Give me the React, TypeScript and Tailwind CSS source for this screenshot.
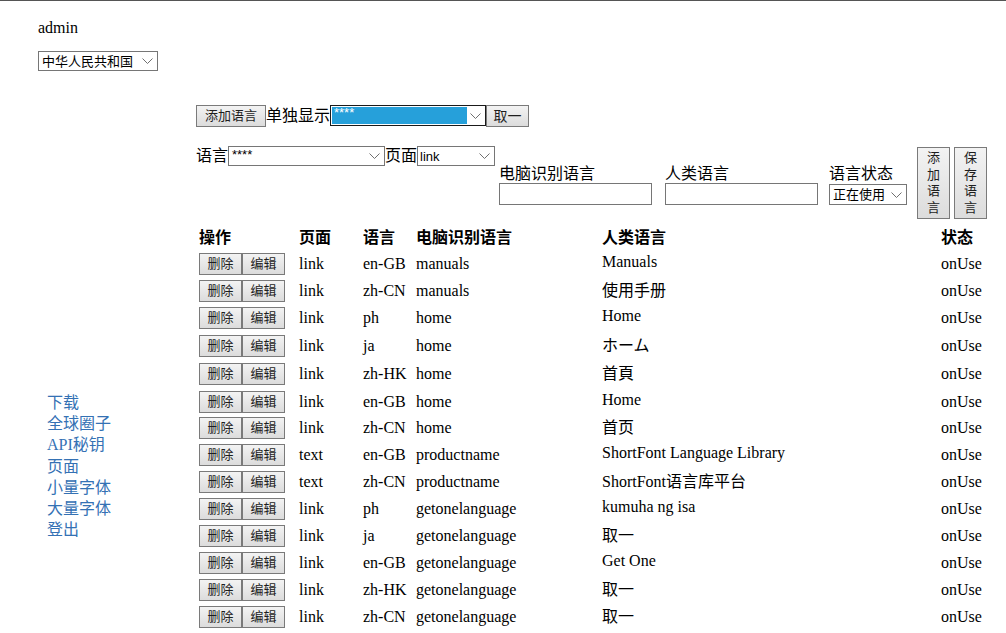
import React from 'react';

const serif = "font-['Liberation_Serif','Noto_Sans_CJK_SC',serif]";
const sans = "font-['Liberation_Sans','Noto_Sans_CJK_SC',sans-serif]";
const btn = `${sans} text-[13px] text-[#1e1e1e] border border-[#7a7a7a] bg-gradient-to-b from-[#f3f3f3] to-[#dcdcdc] flex items-center justify-center`;

const Chevron = () => (
  <svg width="11" height="6" viewBox="0 0 11 6" className="shrink-0">
    <path d="M0.5 0.5 L5.5 5.5 L10.5 0.5" fill="none" stroke="#6f6f6f" strokeWidth="1" />
  </svg>
);

const rows: { page: string; lang: string; key: string; human: string; latin?: boolean; h: string }[] = [
  { page: 'link', lang: 'en-GB', key: 'manuals', human: 'Manuals', latin: true, h: 'h-[27px]' },
  { page: 'link', lang: 'zh-CN', key: 'manuals', human: '使用手册', h: 'h-[27px]' },
  { page: 'link', lang: 'ph', key: 'home', human: 'Home', latin: true, h: 'h-[27px]' },
  { page: 'link', lang: 'ja', key: 'home', human: 'ホーム', h: 'h-[29px]' },
  { page: 'link', lang: 'zh-HK', key: 'home', human: '首頁', h: 'h-[28px]' },
  { page: 'link', lang: 'en-GB', key: 'home', human: 'Home', latin: true, h: 'h-[27px]' },
  { page: 'link', lang: 'zh-CN', key: 'home', human: '首页', h: 'h-[26px]' },
  { page: 'text', lang: 'en-GB', key: 'productname', human: 'ShortFont Language Library', latin: true, h: 'h-[27px]' },
  { page: 'text', lang: 'zh-CN', key: 'productname', human: 'ShortFont语言库平台', h: 'h-[27px]' },
  { page: 'link', lang: 'ph', key: 'getonelanguage', human: 'kumuha ng isa', latin: true, h: 'h-[27px]' },
  { page: 'link', lang: 'ja', key: 'getonelanguage', human: '取一', h: 'h-[27px]' },
  { page: 'link', lang: 'en-GB', key: 'getonelanguage', human: 'Get One', latin: true, h: 'h-[27px]' },
  { page: 'link', lang: 'zh-HK', key: 'getonelanguage', human: '取一', h: 'h-[27px]' },
  { page: 'link', lang: 'zh-CN', key: 'getonelanguage', human: '取一', h: 'h-[27px]' },
  { page: 'text', lang: 'ph', key: 'manuals', human: 'Mga Manwal', latin: true, h: 'h-[27px]' },
];

const nav = ['下载', '全球圈子', 'API秘钥', '页面', '小量字体', '大量字体', '登出'];

export default function App() {
  return (
    <div className={`border-t border-[#555555] bg-white text-black ${serif} text-[16px] h-[633px] overflow-hidden`}>
      <div className="flex">
        {/* left column */}
        <div className="w-[196px] shrink-0 pl-[38px]">
          <div className="mt-[18px] leading-[18px]">admin</div>
          <div className={`mt-[14px] w-[120px] h-[20px] border border-[#767676] flex items-center pl-[3px] pr-[4px] ${sans} text-[13px]`}>
            <span className="flex-1 leading-none">中华人民共和国</span>
            <Chevron />
          </div>
          <div className="mt-[321px] pl-[9px] flex flex-col leading-[21.2px] text-[#3471b4]">
            {nav.map(n => (
              <a key={n} className="cursor-pointer">{n}</a>
            ))}
          </div>
        </div>

        {/* main */}
        <div className="flex-1">
          {/* single display row */}
          <div className="mt-[103px] h-[23px] flex items-center">
            <button className={`${btn} w-[70px] h-[22px] mt-[1px]`}>添加语言</button>
            <span className="w-[64px] leading-[18px]">单独显示</span>
            <div className="w-[156px] h-[21px] border border-[#1a1a1a] flex items-center pl-[1px] pr-[4px]">
              <div className={`w-[135px] h-[17px] bg-[#26a0da] text-white ${sans} text-[13px] leading-[12px] pl-[2px]`}>****</div>
              <div className="flex-1" />
              <Chevron />
            </div>
            <button className={`${btn} w-[43px] h-[22px] mt-[1px] text-[14px]`}>取一</button>
          </div>

          {/* edit row */}
          <div className="mt-[18px] h-[75px] flex items-start">
            <div className="mt-[1px] h-[20px] flex items-center">
              <span className="w-[32px] leading-[18px]">语言</span>
              <div className={`w-[157px] h-[20px] border border-[#767676] flex items-center pl-[3px] pr-[4px] ${sans} text-[13px]`}>
                <span className="flex-1 leading-[12px] self-start mt-[2px]">****</span>
                <Chevron />
              </div>
              <span className="w-[32px] leading-[18px]">页面</span>
              <div className={`w-[78px] h-[20px] border border-[#767676] flex items-center pl-[2px] pr-[4px] ${sans} text-[13px]`}>
                <span className="flex-1 leading-none">link</span>
                <Chevron />
              </div>
            </div>
            <div className="ml-[4px] mt-[20px] w-[153px]">
              <div className="leading-[18px]">电脑识别语言</div>
              <div className="h-[22px] border border-[#767676] bg-white" />
            </div>
            <div className="ml-[13px] mt-[20px] w-[153px]">
              <div className="leading-[18px]">人类语言</div>
              <div className="h-[22px] border border-[#767676] bg-white" />
            </div>
            <div className="ml-[11px] mt-[20px] w-[78px]">
              <div className="leading-[18px]">语言状态</div>
              <div className={`mt-[1px] h-[21px] border border-[#767676] flex items-center pl-[3px] pr-[4px] ${sans} text-[13px]`}>
                <span className="flex-1 leading-none">正在使用</span>
                <Chevron />
              </div>
            </div>
            <button className={`${btn} ml-[10px] mt-[2px] w-[33px] h-[72px] leading-[16.5px] flex-col`}>
              <span>添</span><span>加</span><span>语</span><span>言</span>
            </button>
            <button className={`${btn} ml-[4px] mt-[2px] w-[33px] h-[72px] leading-[16.5px] flex-col`}>
              <span>保</span><span>存</span><span>语</span><span>言</span>
            </button>
          </div>

          {/* table */}
          <div className="mt-[5px] ml-[3px]">
            <div className="h-[25px] flex items-center font-bold leading-[18px]">
              <div className="w-[100px]">操作</div>
              <div className="w-[64px]">页面</div>
              <div className="w-[53px]">语言</div>
              <div className="w-[186px]">电脑识别语言</div>
              <div className="w-[339px]">人类语言</div>
              <div>状态</div>
            </div>
            {rows.map((r, i) => (
              <div key={i} className={`${r.h} flex items-center leading-[18px]`}>
                <div className="w-[100px] flex">
                  <button className={`${btn} w-[43px] h-[22px]`}>删除</button>
                  <button className={`${btn} w-[43px] h-[22px]`}>编辑</button>
                </div>
                <div className="w-[64px]">{r.page}</div>
                <div className="w-[53px]">{r.lang}</div>
                <div className="w-[186px]">{r.key}</div>
                <div className={`w-[339px] ${r.latin ? 'pb-[4px]' : ''}`}>{r.human}</div>
                <div>onUse</div>
              </div>
            ))}
          </div>
        </div>
      </div>
    </div>
  );
}
